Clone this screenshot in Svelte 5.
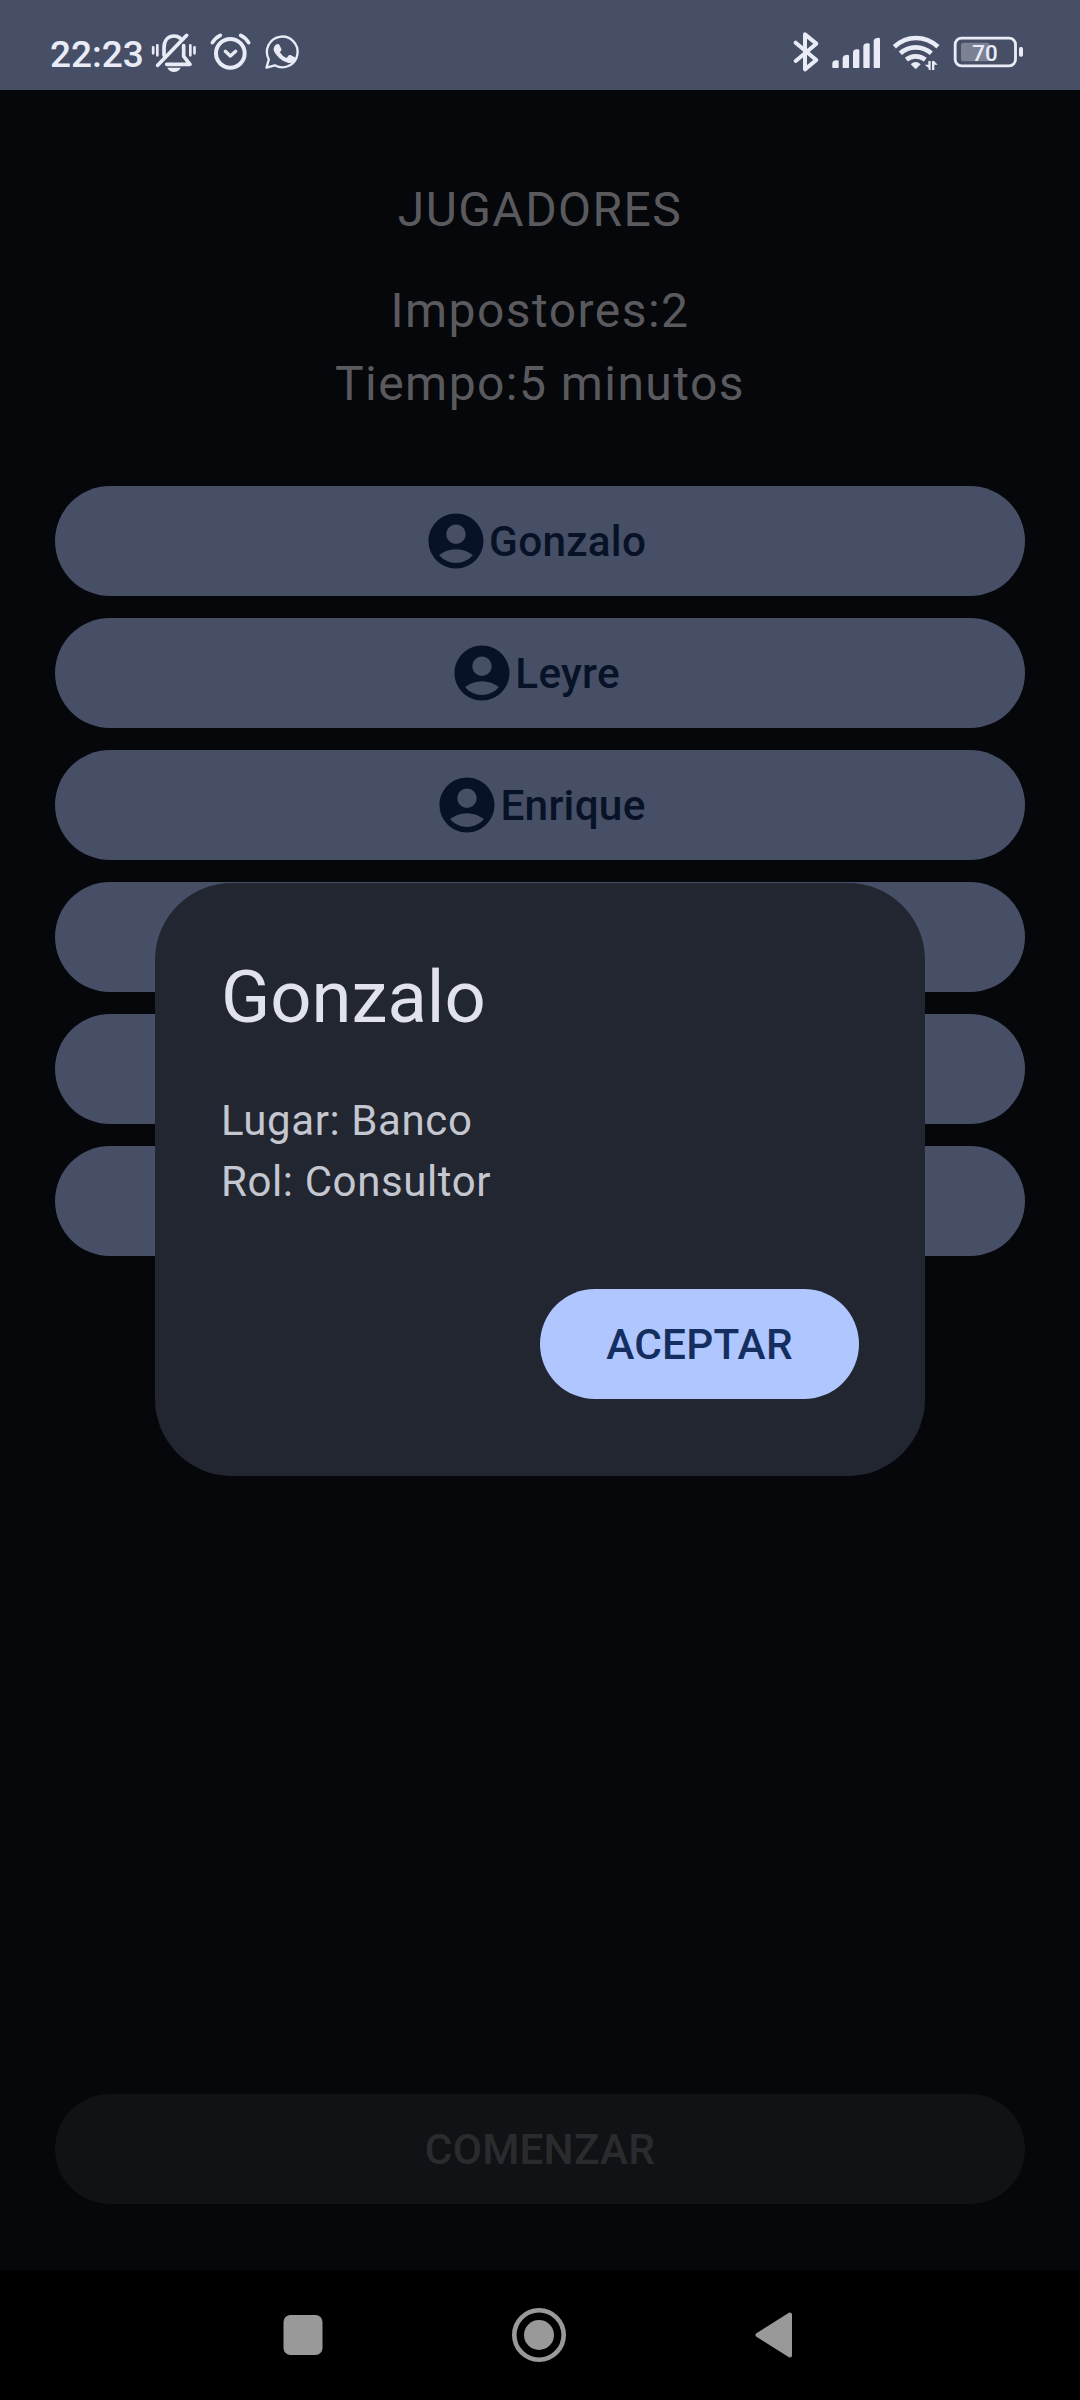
<script>
  // Names are kept exactly as typed, trailing spaces included
  const players = ['Gonzalo ', 'Leyre ', 'Enrique', 'Marta', 'Pablo', 'Lucía'];
  const bars = [[187, 150], [218, 134], [249, 117], [280, 99], [311, 83]];
</script>

<div class="screen">
  <header class="status">
    <span class="clock">22:23</span>
    <svg class="bell" width="48" height="44" viewBox="360 60 144 132">
      <g class="line" stroke-width="11">
        <path d="M369.500 112v18M382 106v30M481 106v30M493.500 112v18" stroke-width="8" />
        <path d="M383 166L470 76" />
        <path d="M402 136v-22c0-21 11-36 30-36c8 0 13 2 18 6" />
        <path d="M461 107v32l19 24h-70" />
      </g>
      <path class="solid" d="M412 173h40q-7 13-20 13t-20-13z" />
    </svg>
    <svg class="alarm" width="45" height="44" viewBox="534 60 135 132">
      <g class="line">
        <circle cx="601" cy="130" r="43" stroke-width="12" />
        <path d="M547 98q8-14 24-22M656 98q-8-14-24-22" stroke-width="11" />
        <path d="M586 124l15 14 16-14" stroke-width="10" />
      </g>
    </svg>
    <svg class="whatsapp" width="40" height="44" viewBox="700.500 60 120 132">
      <path class="line" stroke-width="7" d="M711 173l7-25a46 46 0 1 1 18 18z" />
      <path class="solid" d="M741 103q6-3 9 2l6 13q1 3-5 9q7 12 20 17l7-8q2-2 5-1l13 7q3 2 1 6q-5 13-20 11q-14-2-28-15q-16-16-17-27q0-9 9-14z" />
    </svg>
    <div class="grow"></div>
    <svg class="bluetooth" width="30" height="44" viewBox="63 60 90 132">
      <path class="line" stroke-width="12" d="M77 98l62 52-34 28V73l34 28-62 52" />
    </svg>
    <svg class="signal" width="52" height="44" viewBox="180 60 156 132">
      {#each bars as [x, y]}
        <path class="solid" d="M{x} 172V{y + 9}q1-7 10-8q9-2 9 3V172q0 2-2 2h-15q-2 0-2-2z" />
      {/each}
    </svg>
    <svg class="wifi" width="50" height="44" viewBox="363 60 150 132">
      <g class="line arcs" stroke-width="14">
        <path d="M373 110q29-26 65-26t66 26" />
        <path d="M391 130q20-18 46-18t47 18" />
        <path d="M409 149q12-10 28-10t29 10" />
      </g>
      <path class="solid" d="M422 163q15-14 30 0l-12 12q-3 3-6 0z" />
      <path class="solid" d="M475 153h7v27h-6v-6l-12-10h11zM486 180v-27h6l11 11h-10v16z" />
    </svg>
    <svg class="battery" width="73" height="44" viewBox="546 60 219 132">
      <rect class="charge" x="573" y="98" width="86" height="56" rx="8" />
      <rect class="line" x="555.500" y="84.500" width="181" height="83" rx="19" stroke-width="8.500" />
      <rect class="solid" x="747" y="111" width="12" height="29" rx="5" />
      <text x="645" y="152.500" text-anchor="middle">70</text>
    </svg>
  </header>

  <main>
    <p class="heading">JUGADORES</p>
    <p>Impostores:2</p>
    <p>Tiempo:5 minutos</p>
    <div class="players">
      {#each players as name}
        <button class="player">
          <svg width="66" height="66" viewBox="0 0 24 24">
            <path d="M12 2C6.480 2 2 6.480 2 12s4.480 10 10 10 10-4.480 10-10S17.520 2 12 2zm0 4c1.930 0 3.500 1.570 3.500 3.500S13.930 13 12 13s-3.500-1.570-3.500-3.500S10.070 6 12 6zm0 14c-2.030 0-4.430-.82-6.140-2.880C7.550 15.800 9.680 15 12 15s4.450.8 6.140 2.120C16.430 19.180 14.030 20 12 20z" />
          </svg>
          <span>{name}</span>
        </button>
      {/each}
    </div>
    <button class="start" disabled>COMENZAR</button>
  </main>

  <nav>
    <svg width="40" height="54" viewBox="0 0 40 54"><rect x="0.500" y="7" width="39" height="40" rx="7" /></svg>
    <svg width="54" height="54" viewBox="0 0 54 54">
      <circle class="ring" cx="27" cy="27" r="24.700" />
      <circle cx="27" cy="27" r="15" />
    </svg>
    <svg width="38" height="54" viewBox="0 0 38 54"><path class="back" d="M2.500 27L35 6.500v41z" /></svg>
  </nav>

  <div class="dialog">
    <h1>Gonzalo</h1>
    <div class="body">
      <div>Lugar: Banco</div>
      <div>Rol: Consultor</div>
    </div>
    <button class="accept">ACEPTAR</button>
  </div>
</div>

<style>
  :global(body) {
    background: #000;
  }
  .screen {
    position: relative;
    width: 1080px;
    height: 2400px;
    display: flex;
    flex-direction: column;
    overflow: hidden;
    background: #05070b;
    font-family: Roboto, sans-serif;
  }
  svg {
    display: block;
    flex: none;
  }
  button {
    height: 110px;
    border: 0;
    border-radius: 55px;
    padding: 2px 0 0;
    font: 500 42.350px/60px Roboto, sans-serif;
    letter-spacing: 0.250px;
  }

  .status {
    box-sizing: border-box;
    height: 90px;
    flex: none;
    display: flex;
    align-items: flex-start;
    padding: 30px 55px 0 50px;
    background: #464f66;
    color: #e9ecf7;
  }
  .clock {
    width: 100px;
    font-size: 37px;
    font-weight: 500;
    line-height: 49px;
    white-space: nowrap;
  }
  .line {
    fill: none;
    stroke: #e9ecf7;
    stroke-linecap: round;
    stroke-linejoin: round;
  }
  .arcs {
    stroke-linecap: butt;
  }
  .solid,
  .battery text {
    fill: #e9ecf7;
  }
  .battery text {
    font-size: 67px;
    font-weight: 500;
  }
  .charge {
    fill: #7c8194;
  }
  .alarm,
  .whatsapp {
    margin-left: 10px;
  }
  .grow {
    flex: 1;
  }
  .signal,
  .wifi {
    margin-left: 9px;
  }
  .battery {
    margin-left: 11px;
  }

  main {
    box-sizing: border-box;
    height: 2180px;
    flex: none;
    display: flex;
    flex-direction: column;
    padding: 83px 55px 66px;
  }
  p {
    margin: 0;
    text-align: center;
    color: #5a5a5e;
    font-size: 48px;
    line-height: 73px;
    letter-spacing: 1.450px;
  }
  .heading {
    margin-bottom: 28px;
  }
  .players {
    display: flex;
    flex-direction: column;
    gap: 22px;
    margin-top: 66px;
  }
  .player {
    display: flex;
    align-items: center;
    justify-content: center;
    padding: 0;
    background: #464f66;
    color: #081226;
    fill: #081226;
  }
  .player span {
    padding-top: 2px;
    white-space: pre;
  }
  .start {
    margin-top: auto;
    background: #111215;
    color: #2a2b2e;
  }

  nav {
    height: 130px;
    flex: none;
    display: flex;
    align-items: center;
    justify-content: center;
    gap: 189px;
    padding-right: 4px;
    background: #000;
    fill: #999;
  }
  .ring {
    fill: none;
    stroke: #999;
    stroke-width: 4.600px;
  }
  .back {
    stroke: #999;
    stroke-width: 4px;
    stroke-linejoin: round;
  }

  .dialog {
    position: absolute;
    left: 155px;
    top: 883px;
    box-sizing: border-box;
    width: 770px;
    height: 593px;
    display: flex;
    flex-direction: column;
    padding: 66px 66px 77px;
    border-radius: 77px;
    background: #222631;
  }
  h1 {
    margin: 0 0 44px;
    color: #e2e2ec;
    font-size: 72.400px;
    font-weight: 400;
    line-height: 97px;
  }
  .body {
    color: #c4c6d0;
    font-size: 42px;
    line-height: 61px;
    letter-spacing: 0.600px;
  }
  .accept {
    align-self: flex-end;
    width: 319px;
    margin-top: auto;
    background: #b0c6ff;
    color: #152e60;
  }
</style>
